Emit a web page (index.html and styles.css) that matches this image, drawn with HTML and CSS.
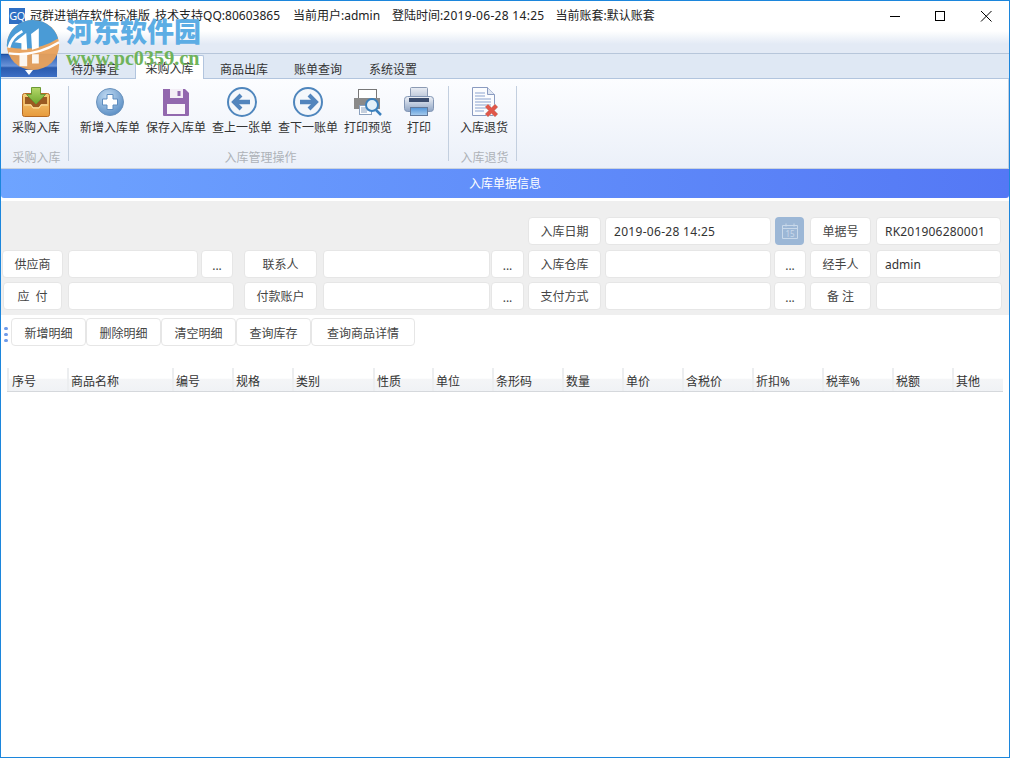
FILE: index.html
```html
<!DOCTYPE html>
<html lang="zh-CN">
<head>
<meta charset="utf-8">
<title>冠群进销存软件标准版</title>
<link rel="stylesheet" href="styles.css">
</head>
<body>
<div class="window">
  <header class="titlebar">
    <div class="appicon">GQ</div>
    <div class="title-text">
      <span class="t1">冠群进销存软件标准版 技术支持QQ:80603865</span>
      <span class="t2">当前用户:admin</span>
      <span class="t3">登陆时间:<span class="num">2019-06-28 14:25</span></span>
      <span>当前账套:默认账套</span>
    </div>
    <div class="winctl">
      <svg width="46" height="30" viewBox="0 0 46 30"><path d="M19 15.500h10" stroke="#000" fill="none"/></svg>
      <svg width="46" height="30" viewBox="0 0 46 30"><rect x="18.500" y="10.500" width="9" height="9" stroke="#000" fill="none"/></svg>
      <svg width="46" height="30" viewBox="0 0 46 30"><path d="M18 10l10.500 10.500M28.500 10L18 20.500" stroke="#000" fill="none"/></svg>
    </div>
  </header>

  <nav class="tabstrip">
    <div class="appbtn"><svg width="10" height="6" viewBox="0 0 10 6"><path d="M1 0h8L5 5z" fill="#fff"/></svg></div>
    <div class="tab">待办事宜</div>
    <div class="tab active">采购入库</div>
    <div class="tab">商品出库</div>
    <div class="tab">账单查询</div>
    <div class="tab last">系统设置</div>
  </nav>

  <section class="ribbon">
    <div class="group g1">
      <div class="group-btns">
        <div class="rbtn">
          <svg class="ric" width="30" height="32" viewBox="0 0 30 32">
            <defs>
              <linearGradient id="box" x1="0" y1="0" x2="0" y2="1"><stop offset="0" stop-color="#f6cf7c"/><stop offset="1" stop-color="#e79a3c"/></linearGradient>
              <linearGradient id="grn" x1="0" y1="0" x2="0" y2="1"><stop offset="0" stop-color="#b6d86a"/><stop offset="1" stop-color="#6ea72e"/></linearGradient>
            </defs>
            <rect x="1.500" y="7.500" width="27" height="23" rx="2" fill="url(#box)" stroke="#b56a24"/>
            <path d="M4 11h22v7H20l-2 3h-6l-2-3H4z" fill="#9a5a22"/>
            <path d="M3 19h7l2 3h6l2-3h7" fill="none" stroke="#fbe3aa"/>
            <path d="M10.500 1.500h9v7h5L15 18 5.500 8.500h5z" fill="url(#grn)" stroke="#6b9a35"/>
          </svg>
          <span>采购入库</span>
        </div>
      </div>
      <div class="group-label">采购入库</div>
    </div>
    <div class="group g2">
      <div class="group-btns">
        <div class="rbtn">
          <svg class="ric" width="30" height="32" viewBox="0 0 30 32">
            <defs>
              <radialGradient id="plusbg" cx="0.4" cy="0.3" r="0.8"><stop offset="0" stop-color="#c3dcf3"/><stop offset="1" stop-color="#4f86c0"/></radialGradient>
            </defs>
            <circle cx="15" cy="16" r="13.500" fill="url(#plusbg)" stroke="#6b93bd"/>
            <path d="M12 8.500h6V13h4.500v6H18v4.500h-6V19H7.500v-6H12z" fill="#fff" stroke="#5d8dc0"/>
          </svg>
          <span>新增入库单</span>
        </div>
        <div class="rbtn">
          <svg class="ric" width="30" height="32" viewBox="0 0 30 32">
            <path d="M2 3h22l4 4v22a1 1 0 0 1-1 1H3a1 1 0 0 1-1-1z" fill="#9268ae"/>
            <rect x="9" y="3" width="13" height="9" fill="#f3eef6"/>
            <rect x="16.500" y="5" width="3" height="5" fill="#9268ae"/>
            <rect x="6" y="18" width="18" height="10" fill="#f8f6fa"/>
          </svg>
          <span>保存入库单</span>
        </div>
        <div class="rbtn">
          <svg class="ric" width="30" height="32" viewBox="0 0 30 32">
            <circle cx="15" cy="16" r="14" fill="#f4f7fb" stroke="#4f86bd" stroke-width="2"/>
            <path d="M14 9l-7 7 7 7" fill="none" stroke="#5285bd" stroke-width="4"/>
            <path d="M9 16h14" fill="none" stroke="#5285bd" stroke-width="4.500"/>
          </svg>
          <span>查上一张单</span>
        </div>
        <div class="rbtn">
          <svg class="ric" width="30" height="32" viewBox="0 0 30 32">
            <circle cx="15" cy="16" r="14" fill="#f4f7fb" stroke="#4f86bd" stroke-width="2"/>
            <path d="M16 9l7 7-7 7" fill="none" stroke="#5285bd" stroke-width="4"/>
            <path d="M7 16h14" fill="none" stroke="#5285bd" stroke-width="4.500"/>
          </svg>
          <span>查下一账单</span>
        </div>
        <div class="rbtn">
          <svg class="ric" width="30" height="32" viewBox="0 0 30 32">
            <rect x="5.500" y="3.500" width="18" height="9" fill="#fff" stroke="#777"/>
            <path d="M1 12h26v11H1z" fill="#8a8a8a"/>
            <rect x="6.500" y="19.500" width="12" height="9" fill="#fff" stroke="#8aa0bd"/>
            <path d="M8 22h8M8 24h8M8 26h6" stroke="#8aa0bd"/>
            <circle cx="19" cy="19" r="6" fill="#e4f0f9" stroke="#3b80bd" stroke-width="2"/>
            <path d="M23 24l5 5" stroke="#3b80bd" stroke-width="2.500"/>
          </svg>
          <span>打印预览</span>
        </div>
        <div class="rbtn">
          <svg class="ric" width="32" height="32" viewBox="0 0 32 32">
            <defs>
              <linearGradient id="ptop" x1="0" y1="0" x2="0" y2="1"><stop offset="0" stop-color="#e9edf4"/><stop offset="1" stop-color="#b7c3d6"/></linearGradient>
              <linearGradient id="pbody" x1="0" y1="0" x2="0" y2="1"><stop offset="0" stop-color="#eef1f6"/><stop offset="1" stop-color="#8ea4c4"/></linearGradient>
              <linearGradient id="ptray" x1="0" y1="0" x2="0" y2="1"><stop offset="0" stop-color="#4e93d8"/><stop offset="1" stop-color="#a9cdee"/></linearGradient>
            </defs>
            <rect x="7.500" y="1.500" width="17" height="11" rx="1" fill="url(#ptop)" stroke="#8b9ab3"/>
            <rect x="1.500" y="10.500" width="29" height="15" rx="3" fill="url(#pbody)" stroke="#8296b5"/>
            <rect x="6" y="12" width="20" height="4" fill="#3b4d6e"/>
            <rect x="7.500" y="21.500" width="17" height="8" fill="url(#ptray)" stroke="#61799b"/>
          </svg>
          <span>打印</span>
        </div>
      </div>
      <div class="group-label">入库管理操作</div>
    </div>
    <div class="group g3">
      <div class="group-btns">
        <div class="rbtn">
          <svg class="ric" width="30" height="32" viewBox="0 0 30 32">
            <path d="M3.500 1.500h15l7 7v21h-22z" fill="#fbfcfe" stroke="#8a9bc0"/>
            <path d="M18.500 1.500v7h7" fill="#dfe6f2" stroke="#8a9bc0"/>
            <path d="M6 7h10M6 10h10M6 13h16M6 16h16M6 19h16M6 22h12M6 25h9" stroke="#8ba3cf"/>
            <path d="M16 21l3-3 3.500 3.500L26 18l3 3-3.500 3.500L29 28l-3 3-3.500-3.500L19 31l-3-3 3.500-3.500z" fill="#e0574a" stroke="#c9b3ad" stroke-width=".6"/>
          </svg>
          <span>入库退货</span>
        </div>
      </div>
      <div class="group-label">入库退货</div>
    </div>
  </section>

  <div class="banner">入库单据信息</div>

  <section class="form">
    <div class="cell label c7">入库日期</div>
    <div class="cell input w166"><span class="num">2019-06-28 14:25</span></div>
    <div class="calbtn">
      <svg width="18" height="18" viewBox="0 0 18 18">
        <path d="M1.500 3.500h15v13h-15z" fill="none" stroke="#c9d9ea"/>
        <path d="M1.500 6.500h15M5 1.500v3M13 1.500v3" fill="none" stroke="#c9d9ea"/>
        <text x="9" y="14.500" class="calnum">15</text>
      </svg>
    </div>
    <div class="cell label w61">单据号</div>
    <div class="cell input w125"><span class="num2">RK201906280001</span></div>

    <div class="cell label w61 c1">供应商</div>
    <div class="cell input w130"></div>
    <div class="cell more w32">...</div>
    <div class="cell label w73">联系人</div>
    <div class="cell input w167"></div>
    <div class="cell more w33">...</div>
    <div class="cell label w73">入库仓库</div>
    <div class="cell input w166"></div>
    <div class="cell more w32">...</div>
    <div class="cell label w61">经手人</div>
    <div class="cell input w125">admin</div>

    <div class="cell label w59 c1 nudge">应&nbsp;&nbsp;付</div>
    <div class="cell input w166 span2"></div>
    <div class="cell label w73">付款账户</div>
    <div class="cell input w167"></div>
    <div class="cell more w33">...</div>
    <div class="cell label w73">支付方式</div>
    <div class="cell input w166"></div>
    <div class="cell more w32">...</div>
    <div class="cell label w61">备&nbsp;注</div>
    <div class="cell input w126"></div>
  </section>

  <section class="actions">
    <div class="grip"><i></i><i></i><i></i></div>
    <div class="abtn">新增明细</div>
    <div class="abtn">删除明细</div>
    <div class="abtn">清空明细</div>
    <div class="abtn">查询库存</div>
    <div class="abtn wide">查询商品详情</div>
  </section>

  <div class="thead">
    <div class="th col60 first">序号</div>
    <div class="th col105">商品名称</div>
    <div class="th col60">编号</div>
    <div class="th col60">规格</div>
    <div class="th col81">类别</div>
    <div class="th col59">性质</div>
    <div class="th col60">单位</div>
    <div class="th col70">条形码</div>
    <div class="th col60">数量</div>
    <div class="th col60">单价</div>
    <div class="th col70">含税价</div>
    <div class="th col70">折扣%</div>
    <div class="th col70">税率%</div>
    <div class="th col60">税额</div>
    <div class="th col51">其他</div>
  </div>
</div>

<div class="watermark">
  <svg class="wm-logo" width="58" height="50" viewBox="0 0 60 54" preserveAspectRatio="none">
    <circle cx="30" cy="27" r="27" fill="#e9a15a" opacity=".95"/>
    <path d="M3 29A27 27 0 0 1 56 20Q32 36 3 29z" fill="#4a9bd6"/>
    <path d="M5 36Q32 40 57 24" fill="none" stroke="#fff" stroke-width="2.500"/>
    <path d="M5 30Q7 19 19 12" fill="none" stroke="#fff" stroke-width="3"/>
    <path d="M11 24L23 14 24 32H18V25z" fill="#fff"/>
    <path d="M28 15L36 9V30L29 32z" fill="#fff"/>
    <path d="M16 37h8v13h-8zM29 37h7v10h-7z" fill="#fff" opacity=".9"/>
  </svg>
  <div class="wm-text">
    <div class="wm-cn">河东软件园</div>
    <div class="wm-url">www.pc0359.cn</div>
  </div>
</div>
</body>
</html>
```
FILE: styles.css
```css
* { box-sizing: border-box; }
html, body { margin: 0; padding: 0; }
body {
  width: 1010px;
  height: 758px;
  overflow: hidden;
  position: relative;
  background: #fff;
  font-family: "Noto Sans", "Noto Sans CJK SC", sans-serif;
  font-size: 12px;
  color: #333;
}
.window {
  width: 1010px;
  height: 758px;
  border: 1px solid #1c86dc;
  background: #fff;
  display: flex;
  flex-direction: column;
  overflow: hidden;
}
.num { letter-spacing: .3px; }
.num2 { letter-spacing: .2px; }

/* title bar */
.titlebar {
  height: 53px;
  flex: none;
  display: flex;
  align-items: flex-start;
  border-bottom: 1px solid #b7c6da;
  background: linear-gradient(#fff 0, #fff 30px, #e3eaf5 43px, #e3eaf5 100%);
}
.appicon {
  width: 16px;
  height: 16px;
  margin: 7px 0 0 8px;
  background: #2f6fc4;
  color: #fff;
  font-size: 11px;
  line-height: 16px;
  text-align: center;
  letter-spacing: -.5px;
}
.title-text {
  margin-left: 5px;
  height: 30px;
  line-height: 30px;
  display: flex;
  color: #222;
  white-space: nowrap;
  word-spacing: 2px;
  flex: 1;
}
.t1 { margin-right: 13px; }
.t2 { margin-right: 12px; }
.t3 { margin-right: 11px; word-spacing: 0; }
.winctl { display: flex; }
.winctl svg { display: block; }

/* tabs */
.tabstrip {
  height: 25px;
  flex: none;
  display: flex;
  background: #dfe8f4;
  border-bottom: 1px solid #b2c5de;
}
.appbtn {
  width: 56px;
  height: 23px;
  display: flex;
  justify-content: center;
  align-items: flex-end;
  margin-right: 1px;
  border-top: 1px solid #1a4fa6;
  background: linear-gradient(#2a5fb5, #6a93d8 50%, #2a5aad 58%, #3d6fc5);
}
.appbtn svg { display: block; margin-bottom: 1px; }
.tab {
  padding: 0 13px;
  height: 24px;
  line-height: 31px;
  color: #333;
  white-space: nowrap;
}
.tab.active {
  margin: 1px 3px 0;
  padding: 0 9.5px;
  height: 24px;
  line-height: 26px;
  background: #fff;
  border: 1px solid #b2c5de;
  border-bottom: 0;
  border-radius: 2px 2px 0 0;
}
.tab.last { margin-left: 1px; }

/* ribbon */
.ribbon {
  height: 90px;
  flex: none;
  display: flex;
  background: linear-gradient(#fcfdff, #ebf0f9);
  border-bottom: 1px solid #c9d3df;
  border-right: 1px solid #c4d0e0;
}
.group {
  margin-top: 7px;
  height: 75px;
  display: flex;
  flex-direction: column;
  border-right: 1px solid #c3cfdf;
}
.g1 { width: 68px; padding-left: 8px; }
.g2 { width: 380px; padding-left: 8px; }
.g3 { width: 68px; padding-left: 8px; }
.group-btns { display: flex; height: 63px; flex: none; }
.rbtn {
  min-width: 48px;
  padding: 0 3px;
  display: flex;
  flex-direction: column;
  align-items: center;
  color: #333;
  white-space: nowrap;
}
.ric { display: block; height: 32px; flex: none; }
.rbtn span { line-height: 20px; }
.group-label {
  flex: none;
  padding-right: 4px;
  text-align: center;
  color: #aeb2b8;
  line-height: 18px;
}

/* banner */
.banner {
  height: 29px;
  flex: none;
  line-height: 29px;
  text-align: center;
  color: #fff;
  background: linear-gradient(90deg, #6ea4ff, #5478f5);
  border-radius: 0 0 3px 3px;
}

/* form */
.form {
  margin-top: 3px;
  height: 114px;
  flex: none;
  background: #efefef;
  padding: 16px 0 0 1px;
  display: grid;
  grid-template-columns: 66px 133px 43px 79px 168px 37px 77px 169px 36px 66px 125px;
  grid-template-rows: 33px 32px 28px;
}
.cell {
  height: 28px;
  background: #fff;
  border: 1px solid #e6e6e6;
  border-radius: 4px;
  line-height: 28px;
  white-space: nowrap;
}
.label { text-align: center; color: #444; }
.input { padding-left: 8px; color: #333; }
.more { text-align: center; color: #444; line-height: 30px; }
.c7 { grid-column: 7; width: 73px; }
.c1 { grid-column: 1; }
.span2 { grid-column: span 2; }
.nudge { margin-left: 1px; }
.w59 { width: 59px; }
.w61 { width: 61px; }
.w73 { width: 73px; }
.w32 { width: 32px; }
.w33 { width: 33px; }
.w125 { width: 125px; }
.w126 { width: 126px; }
.w130 { width: 130px; }
.w166 { width: 166px; }
.w167 { width: 167px; }
.calbtn {
  width: 29px;
  height: 28px;
  margin-left: 1px;
  background: #9cb7d6;
  border-radius: 4px;
  display: flex;
  align-items: center;
  justify-content: center;
}
.calbtn svg { display: block; }
.calnum {
  fill: #c9d9ea;
  font-size: 8px;
  text-anchor: middle;
}

/* action buttons */
.actions {
  height: 28px;
  margin-top: 3px;
  flex: none;
  display: flex;
  align-items: stretch;
}
.grip {
  width: 10px;
  padding: 9px 0 0 3px;
  display: flex;
  flex-direction: column;
  gap: 3px;
}
.grip i {
  display: block;
  width: 4px;
  height: 3px;
  border-radius: 2px;
  background: #6f9bea;
}
.abtn {
  width: 75px;
  height: 28px;
  background: #fff;
  border: 1px solid #e6e6e6;
  border-radius: 4px;
  text-align: center;
  line-height: 29px;
  color: #444;
  white-space: nowrap;
}
.abtn.wide { width: 104px; }

/* table header */
.thead {
  margin: 22px 0 0 6px;
  width: 996px;
  height: 24px;
  flex: none;
  display: flex;
  background: linear-gradient(#fff 0, #fff 44%, #f4f5f7 50%, #f0f2f5 100%);
  border-bottom: 1px solid #d5d8dc;
}
.th {
  flex: none;
  height: 23px;
  padding-left: 2px;
  line-height: 27px;
  color: #333;
  border-left: 2px solid #eceef0;
  white-space: nowrap;
}
.th.first { padding-left: 3px; }
.col59 { width: 59px; }
.col60 { width: 60px; }
.col105 { width: 105px; }
.col81 { width: 81px; }
.col70 { width: 70px; }
.col51 { width: 51px; }

/* watermark overlay */
.watermark {
  position: absolute;
  left: 4px;
  top: 17px;
  width: 200px;
  height: 54px;
  display: flex;
  pointer-events: none;
}
.wm-logo { display: block; flex: none; margin-top: 3px; }
.wm-text { margin-left: 4px; }
.wm-cn {
  font-family: "Noto Sans CJK SC", sans-serif;
  font-size: 27px;
  font-weight: 900;
  line-height: 27px;
  color: #5cade4;
  white-space: nowrap;
}
.wm-url {
  margin-top: 4px;
  font-family: "Liberation Serif", serif;
  font-size: 20.200px;
  font-weight: bold;
  line-height: 20px;
  color: #6fb35a;
  white-space: nowrap;
}
```
